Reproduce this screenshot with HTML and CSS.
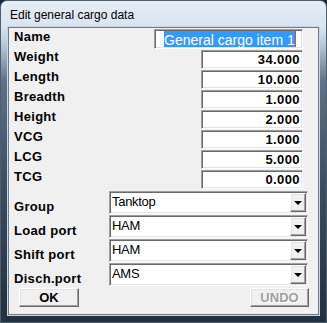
FILE: index.html
```html
<!DOCTYPE html>
<html lang="en">
<head>
  <meta charset="UTF-8" />
  <title>Edit general cargo data</title>
  <link rel="stylesheet" href="styles.css">
</head>
<body>
  <div class="window">
    <div class="titlebar">Edit general cargo data</div>
    <div class="client">
      <div class="row">
        <span class="label">Name</span>
        <div class="edit name-edit"><span class="sel">General cargo item 1</span><span class="caret"></span></div>
      </div>
      <div class="row"><span class="label">Weight</span><div class="edit num">34.000</div></div>
      <div class="row"><span class="label">Length</span><div class="edit num">10.000</div></div>
      <div class="row"><span class="label">Breadth</span><div class="edit num">1.000</div></div>
      <div class="row"><span class="label">Height</span><div class="edit num">2.000</div></div>
      <div class="row"><span class="label">VCG</span><div class="edit num">1.000</div></div>
      <div class="row"><span class="label">LCG</span><div class="edit num">5.000</div></div>
      <div class="row"><span class="label">TCG</span><div class="edit num">0.000</div></div>

      <div class="combos">
        <div class="crow"><span class="label">Group</span><div class="combo"><span class="ctext">Tanktop</span><span class="drop"></span></div></div>
        <div class="crow"><span class="label">Load port</span><div class="combo"><span class="ctext">HAM</span><span class="drop"></span></div></div>
        <div class="crow"><span class="label">Shift port</span><div class="combo"><span class="ctext">HAM</span><span class="drop"></span></div></div>
        <div class="crow"><span class="label">Disch.port</span><div class="combo"><span class="ctext">AMS</span><span class="drop"></span></div></div>
      </div>

      <div class="buttons">
        <button class="btn">OK</button>
        <button class="btn disabled">UNDO</button>
      </div>
    </div>
  </div>
</body>
</html>
```

FILE: styles.css
```css
html, body {
  margin: 0;
  padding: 0;
}

body {
  width: 327px;
  height: 323px;
  overflow: hidden;
  background: #1b2636;
}

.window {
  width: 327px;
  height: 323px;
  box-sizing: border-box;
  padding: 0 7px 7px;
  border: 1px solid #4f5f70;
  border-radius: 7px 7px 0 0;
  background: linear-gradient(180deg, #e6eef6 0, #d6e3ef 27px, #b4c6d6 45px, #5d7389 80px, #3b4e63 180px, #22303f 100%);
  display: flex;
  flex-direction: column;
}

.titlebar {
  height: 24px;
  padding: 2px 0 0 2px;
  line-height: 24px;
  font-family: "Liberation Sans", Arial, sans-serif;
  font-size: 12px;
  color: #000;
}

.client {
  flex: 1;
  box-sizing: border-box;
  border: 1px solid #6f7b88;
  background: #f0f0f0;
  padding: 1px 15px 0 5px;
  font-family: "Liberation Sans", Arial, sans-serif;
  color: #000;
  box-shadow: 0 0 0 1px #c9d6e2;
}

.row {
  display: flex;
  height: 20px;
}

.label {
  flex: 1;
  font-size: 13px;
  font-weight: bold;
  line-height: 16px;
  letter-spacing: 0.3px;
}

.edit {
  box-sizing: border-box;
  height: 19px;
  margin-top: 1px;
  background: #fff;
  border: 1px solid;
  border-color: #a0a0a0 #fff #fff #a0a0a0;
  box-shadow: inset 1px 1px 0 #696969, inset -1px -1px 0 #e3e3e3;
}

.num {
  width: 102px;
  padding: 1px 2px 0 0;
  text-align: right;
  font-size: 13px;
  font-weight: bold;
  line-height: 15px;
  letter-spacing: 0.4px;
}

.name-edit {
  width: 149px;
  height: 20px;
  margin-top: 0;
  padding: 1px 0 0 9px;
  display: flex;
  align-items: flex-start;
}

.sel {
  box-sizing: border-box;
  height: 16px;
  padding-top: 3px;
  background: #3399ff;
  color: #fff;
  font-size: 14px;
  line-height: 13px;
  white-space: nowrap;
}

.caret {
  width: 1px;
  height: 16px;
  background: #cc5a10;
}

.combos {
  margin-top: 2px;
  margin-right: -5px;
}

.crow {
  display: flex;
  height: 23px;
  margin-bottom: 1px;
}

.crow .label {
  align-self: flex-end;
  margin-bottom: -1px;
}

.combo {
  width: 199px;
  box-sizing: border-box;
  display: flex;
  background: #fff;
  border: 1px solid;
  border-color: #a0a0a0 #fff #fff #a0a0a0;
  box-shadow: inset 1px 1px 0 #696969, inset -1px -1px 0 #e3e3e3;
  padding: 1px;
}

.ctext {
  flex: 1;
  padding-left: 1px;
  font-size: 13px;
  line-height: 18px;
  letter-spacing: -0.3px;
}

.drop {
  width: 16px;
  box-sizing: border-box;
  background: #f0f0f0;
  border: 1px solid;
  border-color: #fff #696969 #696969 #fff;
  box-shadow: inset -1px -1px 0 #a0a0a0, inset 1px 1px 0 #e3e3e3;
  display: flex;
  align-items: center;
  justify-content: center;
}

.drop::after {
  content: "";
  border-left: 4px solid transparent;
  border-right: 4px solid transparent;
  border-top: 4px solid #000;
  margin-top: 1px;
}

.buttons {
  display: flex;
  justify-content: space-between;
  margin: 2px -6px 0 5px;
}

.btn {
  width: 60px;
  height: 19px;
  padding: 0;
  box-sizing: border-box;
  background: #f0f0f0;
  border: 1px solid;
  border-color: #fff #696969 #696969 #fff;
  box-shadow: inset -1px -1px 0 #a0a0a0, inset 1px 1px 0 #e3e3e3;
  font-family: "Liberation Sans", Arial, sans-serif;
  font-size: 13px;
  font-weight: bold;
  line-height: 16px;
  color: #000;
}

.btn.disabled {
  width: 59px;
  color: #a0a0a0;
  text-shadow: 1px 1px 0 #fff;
}
```
